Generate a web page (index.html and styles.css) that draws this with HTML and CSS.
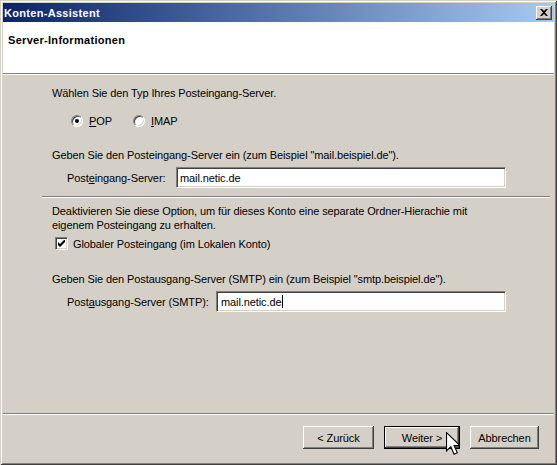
FILE: index.html
```html
<!DOCTYPE html>
<html lang="de">
<head>
    <meta charset="UTF-8">
    <title>Konten-Assistent</title>
    <link rel="stylesheet" href="styles.css">
</head>
<body>
    <div class="window">
        <div class="titlebar">
            <span class="title">Konten-Assistent</span>
            <button class="close" type="button" aria-label="Schließen">
                <svg width="8" height="7" viewBox="0 0 8 7">
                    <path d="M0 0h2l2 2 2-2h2L5 3.5 8 7H6L4 5 2 7H0l3-3.5z" fill="#000"/>
                </svg>
            </button>
        </div>
        <div class="header">
            <h1>Server-Informationen</h1>
        </div>
        <div class="content">
            <p class="intro">Wählen Sie den Typ Ihres Posteingang-Server.</p>
            <div class="radios">
                <label class="option"><span class="radio checked"></span><span><u>P</u>OP</span></label>
                <label class="option"><span class="radio"></span><span><u>I</u>MAP</span></label>
            </div>
            <p class="hint">Geben Sie den Posteingang-Server ein (zum Beispiel "mail.beispiel.de").</p>
            <div class="field">
                <label class="field-label">Post<u>e</u>ingang-Server:</label>
                <input class="textbox in" type="text" value="mail.netic.de">
            </div>
            <div class="etched inner"></div>
            <p class="hint-tight">Deaktivieren Sie diese Option, um für dieses Konto eine separate Ordner-Hierachie mit eigenem Posteingang zu erhalten.</p>
            <label class="check">
                <span class="checkbox">
                    <svg width="7" height="7" viewBox="0 0 7 7">
                        <path d="M0 2v3l2 2 5-5V-1L2 4z" fill="#000"/>
                    </svg>
                </span>
                <span>Globaler Posteingang (im Lokalen Konto)</span>
            </label>
            <p class="hint smtp">Geben Sie den Postausgang-Server (SMTP) ein (zum Beispiel "smtp.beispiel.de").</p>
            <div class="field">
                <label class="field-label">Post<u>a</u>usgang-Server (SMTP):</label>
                <div class="textbox out">mail.netic.de<span class="caret"></span></div>
            </div>
        </div>
        <div class="footer">
            <div class="etched"></div>
            <div class="buttons">
                <button class="btn back" type="button">&lt; Zurück</button>
                <button class="btn next default" type="button">Weiter &gt;</button>
                <button class="btn cancel" type="button">Abbrechen</button>
            </div>
        </div>
        <svg class="cursor" width="14" height="24" viewBox="0 0 13 22">
            <path d="M0.5 0.5v17l4-4 3 7 3-1.3-3-6.7h5.5z" fill="#fff" stroke="#000" stroke-width="1"/>
        </svg>
    </div>
</body>
</html>
```

FILE: styles.css
```css
body {
    margin: 0;
    font-family: "Liberation Sans", Arial, sans-serif;
    font-size: 11px;
    letter-spacing: -0.1px;
    color: #000;
    background: #d4d0c8;
}
.window {
    position: relative;
    width: 557px;
    height: 465px;
    box-sizing: border-box;
    padding: 3px;
    display: flex;
    flex-direction: column;
    background: #d4d0c8;
    box-shadow: inset 1px 1px #d4d0c8, inset -1px -1px #404040,
                inset 2px 2px #fff, inset -2px -2px #808080;
}
.titlebar {
    height: 19px;
    display: flex;
    align-items: center;
    justify-content: space-between;
    padding: 0 2px 0 1px;
    background: linear-gradient(to right, #0a246a, #a6caf0);
}
.title {
    color: #fff;
    font-weight: bold;
    font-size: 11px;
    letter-spacing: 0.3px;
}
.close {
    width: 16px;
    height: 14px;
    padding: 0;
    border: none;
    display: flex;
    align-items: center;
    justify-content: center;
    background: #d4d0c8;
    box-shadow: inset -1px -1px #404040, inset 1px 1px #fff,
                inset -2px -2px #808080;
}
.header {
    height: 52px;
    box-sizing: border-box;
    padding: 12px 5px 0;
    background: #fff;
    border-bottom: 1px solid #808080;
    box-shadow: 0 1px #fff;
    margin-bottom: 1px;
}
h1 {
    margin: 0;
    font-size: 11px;
    line-height: 13px;
    font-weight: bold;
    letter-spacing: 0.3px;
}
.content {
    flex: 1;
    padding: 12px 48px 0 49px;
}
p {
    margin: 0;
    line-height: 13px;
}
.radios {
    display: flex;
    gap: 21px;
    margin: 14px 0 0 19px;
    height: 13px;
    align-items: center;
}
.option, .check {
    display: flex;
    align-items: center;
    gap: 6px;
}
.radio {
    width: 12px;
    height: 12px;
    box-sizing: border-box;
    border-radius: 50%;
    background: #fff;
    border: 1px solid;
    border-color: #808080 #fff #fff #808080;
    box-shadow: inset 1px 1px #404040, inset -1px -1px #d4d0c8;
    display: flex;
    align-items: center;
    justify-content: center;
}
.radio.checked::after {
    content: "";
    width: 4px;
    height: 4px;
    border-radius: 50%;
    background: #000;
}
.hint {
    margin-top: 22px;
}
.smtp {
    margin-top: 23px;
}
.field {
    display: flex;
    align-items: center;
    margin: 5px 0 0 15px;
}
.field-label {
    flex: 1 0 auto;
}
.textbox {
    height: 21px;
    box-sizing: border-box;
    padding: 0 3px;
    font: inherit;
    letter-spacing: inherit;
    color: #000;
    background: #fff;
    border: 1px solid;
    border-color: #808080 #fff #fff #808080;
    box-shadow: inset 1px 1px #404040, inset -1px -1px #d4d0c8;
    outline: none;
    display: flex;
    align-items: center;
}
.textbox.in {
    width: 330px;
}
.textbox.out {
    width: 290px;
    padding-left: 4px;
}
.caret {
    width: 1px;
    height: 13px;
    background: #000;
    margin-left: 1px;
}
.etched {
    height: 1px;
    background: #808080;
    border-bottom: 1px solid #fff;
}
.inner {
    margin: 8px -44px 0 -10px;
}
.hint-tight {
    margin-top: 6px;
    line-height: 14px;
}
.check {
    margin: 5px 0 0 3px;
    height: 13px;
    gap: 5px;
}
.checkbox {
    width: 13px;
    height: 13px;
    box-sizing: border-box;
    background: #fff;
    border: 1px solid;
    border-color: #808080 #fff #fff #808080;
    box-shadow: inset 1px 1px #404040, inset -1px -1px #d4d0c8;
    display: flex;
    align-items: center;
    justify-content: center;
}
.footer {
    padding-bottom: 13px;
}
.buttons {
    display: flex;
    justify-content: flex-end;
    gap: 10px;
    margin: 11px 15px 0 0;
}
.btn {
    height: 23px;
    padding: 0;
    border: none;
    font: inherit;
    letter-spacing: inherit;
    color: #000;
    background: #d4d0c8;
    box-shadow: inset -1px -1px #404040, inset 1px 1px #fff,
                inset -2px -2px #808080;
}
.back {
    width: 71px;
}
.next {
    width: 76px;
}
.cancel {
    width: 69px;
}
.default {
    box-shadow: inset 0 0 0 1px #000, inset -2px -2px #404040,
                inset 2px 2px #fff, inset -3px -3px #808080;
}
.cursor {
    position: absolute;
    left: 446px;
    top: 432px;
}
```
